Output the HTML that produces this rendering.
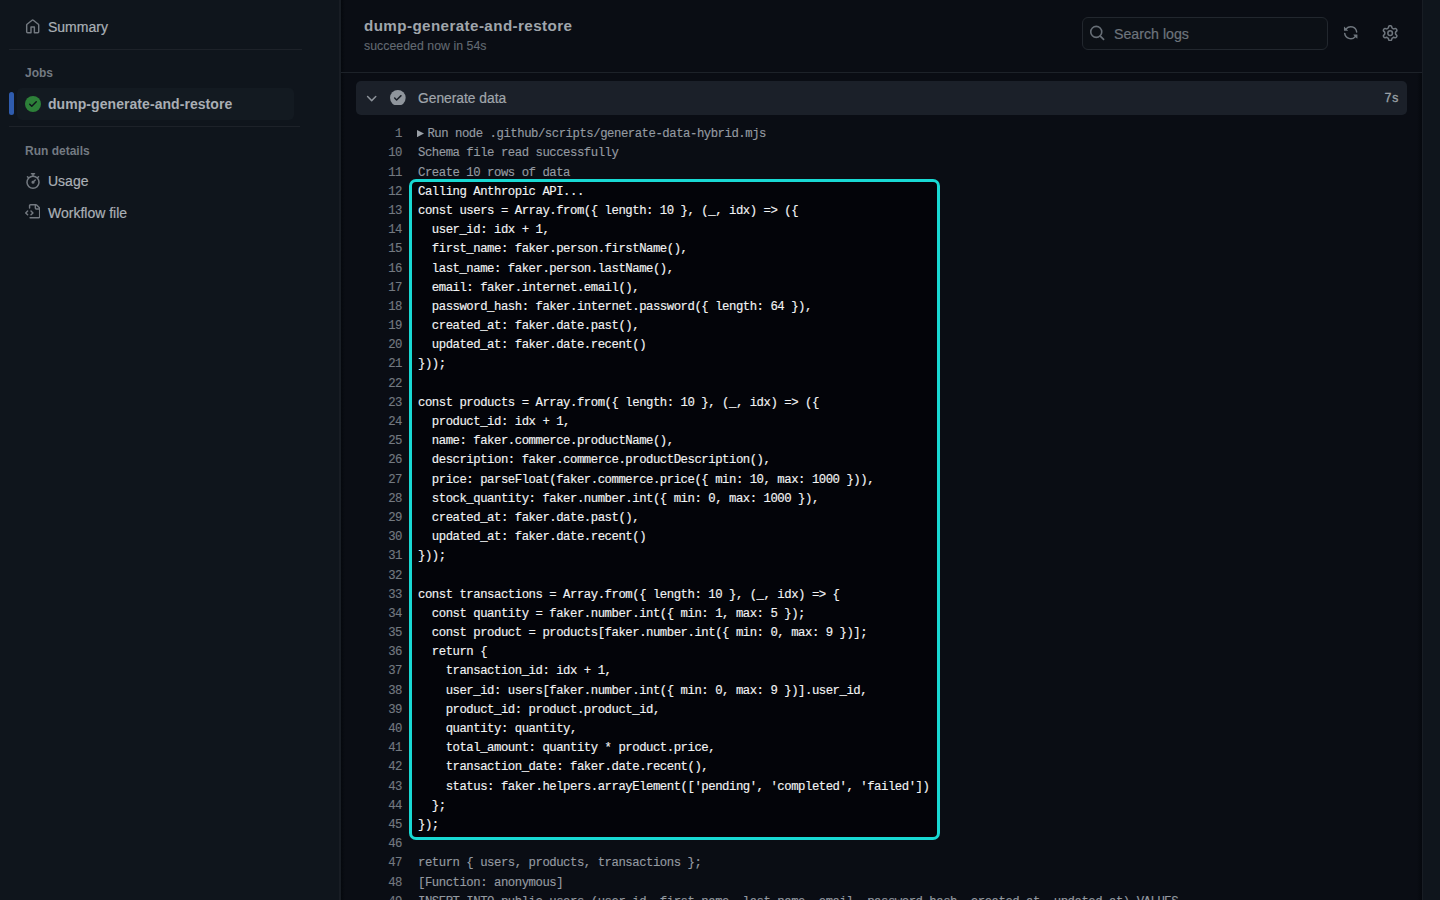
<!DOCTYPE html>
<html><head><meta charset="utf-8">
<style>
*{box-sizing:border-box;margin:0;padding:0}
html,body{width:1440px;height:900px;overflow:hidden;background:#0a0d14;font-family:"Liberation Sans",sans-serif}
.abs{position:absolute}
#side{left:0;top:0;width:339px;height:900px;background:#0f151c}
#sband{left:341px;top:0;width:4px;height:900px;background:linear-gradient(to right,#05080d,#0a0d14)}
#sideb{left:339px;top:0;width:2px;height:900px;background:#181d24}
#rpanel{left:1422px;top:0;width:18px;height:900px;background:#0f151c;border-left:1px solid #181d24}
#rband{left:1417px;top:73px;width:5px;height:827px;background:linear-gradient(to right,#0a0d14,#05080d)}
.sep{height:1px;background:#1d2229}
.t{white-space:nowrap;line-height:1}
.r{-webkit-text-stroke:0.2px currentColor}
svg{display:block}
#logs{left:356px;top:125.2px;width:1050px;font-family:"Liberation Mono",monospace;font-size:12.3px;letter-spacing:-0.469px;line-height:19.2px;-webkit-text-stroke:0.15px currentColor}
.ln{position:absolute;left:0;width:46px;text-align:right;color:#737980}
.lt{position:absolute;left:62px;color:#949aa1;white-space:pre}
.row{position:relative;height:19.2px}
#hl{left:409px;top:179px;width:531px;height:661px;border:3px solid #18d9d3;border-radius:7px;background:#030409}
.row.in .lt{color:#f2f3f4}
</style></head><body>
<div id="side" class="abs"></div>
<div id="sideb" class="abs"></div>
<div id="sband" class="abs"></div>
<div id="rband" class="abs"></div>
<div id="rpanel" class="abs"></div>

<!-- sidebar -->
<svg class="abs" style="left:25px;top:19px" width="15.4" height="15.4" viewBox="0 0 16 16" fill="#737980"><path d="M6.906.664a1.749 1.749 0 0 1 2.187 0l5.25 4.2c.415.332.657.835.657 1.367v7.019A1.75 1.75 0 0 1 13.25 15h-3.5a.75.75 0 0 1-.75-.75V9H7v5.25a.75.75 0 0 1-.75.75h-3.5A1.75 1.75 0 0 1 1 13.250V6.23c0-.531.242-1.034.657-1.366l5.25-4.2Zm1.25 1.171a.25.25 0 0 0-.312 0l-5.25 4.2a.25.25 0 0 0-.094.196v7.019c0 .138.112.25.25.25H5.5V8.25a.75.75 0 0 1 .75-.75h3.5a.75.75 0 0 1 .75.75v5.25h2.75a.25.25 0 0 0 .25-.25V6.23a.25.25 0 0 0-.094-.195Z"/></svg>
<div class="abs t r" style="left:48px;top:20px;font-size:14px;color:#aab0b6">Summary</div>
<div class="abs sep" style="left:9px;top:49px;width:293px"></div>
<div class="abs t" style="left:25px;top:67px;font-size:12px;font-weight:bold;color:#737a82">Jobs</div>
<div class="abs" style="left:17px;top:88px;width:277px;height:32px;border-radius:5px;background:#131a21"></div>
<div class="abs" style="left:9px;top:92px;width:5px;height:23px;border-radius:3px;background:#2f5cae"></div>
<svg class="abs" style="left:24.5px;top:95.5px" width="16" height="16" viewBox="0 0 16 16"><circle cx="8" cy="8" r="8" fill="#2d8039"/><path d="M11.78 6.28a.751.751 0 0 0-.018-1.042.751.751 0 0 0-1.042-.018L6.75 9.19 5.28 7.72a.751.751 0 0 0-1.042.018.751.751 0 0 0-.018 1.042l2 2a.75.75 0 0 0 1.06 0Z" fill="#0f141b"/></svg>
<div class="abs t" style="left:48px;top:97px;font-size:14px;letter-spacing:0.06px;font-weight:bold;color:#a9aeb4">dump-generate-and-restore</div>
<div class="abs sep" style="left:9px;top:126px;width:291px"></div>
<div class="abs t" style="left:25px;top:145px;font-size:12px;font-weight:bold;color:#737a82">Run details</div>
<svg class="abs" style="left:24.7px;top:172.9px" width="16" height="16" viewBox="0 0 16 16" fill="#737980"><path d="M5.75.75A.75.75 0 0 1 6.5 0h3a.75.75 0 0 1 0 1.5h-.75v1l-.001.041a6.724 6.724 0 0 1 3.464 1.435l.007-.006.75-.75a.749.749 0 0 1 1.275.326.749.749 0 0 1-.215.734l-.75.75-.006.007a6.75 6.75 0 1 1-10.548 0L2.72 5.030l-.75-.75a.751.751 0 0 1 .018-1.042.751.751 0 0 1 1.042-.018l.75.75.007.006A6.72 6.72 0 0 1 7.25 2.541V1.5H6.5a.75.75 0 0 1-.75-.75ZM8 14.5a5.25 5.25 0 1 0-.001-10.501A5.25 5.25 0 0 0 8 14.5Zm.389-6.7 1.33-1.33a.75.75 0 1 1 1.061 1.06L9.45 8.861A1.503 1.503 0 0 1 8 10.75a1.499 1.499 0 1 1 .389-2.950Z"/></svg>
<div class="abs t r" style="left:48px;top:174px;font-size:14px;color:#aab0b6">Usage</div>
<svg class="abs" style="left:24.5px;top:203.5px" width="15.4" height="15.4" viewBox="0 0 16 16" fill="#737980"><path d="M4 1.75C4 .784 4.784 0 5.75 0h5.586c.464 0 .909.184 1.237.513l2.914 2.914c.329.328.513.773.513 1.237v8.586A1.75 1.75 0 0 1 14.25 15h-9a.75.75 0 0 1 0-1.5h9a.25.25 0 0 0 .25-.25V6h-2.75A1.75 1.75 0 0 1 10 4.25V1.5H5.75a.25.25 0 0 0-.25.25v2.5a.75.75 0 0 1-1.5 0Zm1.72 4.97a.75.75 0 0 1 1.06 0l2 2a.75.75 0 0 1 0 1.06l-2 2a.749.749 0 0 1-1.275-.326.749.749 0 0 1 .215-.734l1.47-1.47-1.470-1.47a.75.75 0 0 1 0-1.06ZM3.28 7.78 1.81 9.25l1.47 1.47a.751.751 0 0 1-.018 1.042.751.751 0 0 1-1.042.018l-2-2a.75.75 0 0 1 0-1.06l2-2a.751.751 0 0 1 1.042.018.751.751 0 0 1 .018 1.042Zm8.22-6.218V4.25c0 .138.112.25.25.25h2.688l-.011-.013-2.914-2.914-.013-.011Z"/></svg>
<div class="abs t r" style="left:48px;top:206px;font-size:14px;color:#aab0b6">Workflow file</div>

<!-- header -->
<div class="abs t" style="left:364px;top:18.3px;font-size:15.2px;letter-spacing:0.4px;font-weight:bold;color:#a0a6ac">dump-generate-and-restore</div>
<div class="abs t" style="left:364px;top:40.3px;font-size:12.3px;letter-spacing:0.04px;-webkit-text-stroke:0.1px currentColor;color:#636a72">succeeded now in 54s</div>
<div class="abs" style="left:1082px;top:17px;width:246px;height:33px;border:1px solid #22272e;border-radius:6px;background:#0c1016"></div>
<svg class="abs" style="left:1084px;top:20px" width="26" height="26" viewBox="0 0 26 26"><circle cx="12.25" cy="11.9" r="5.5" fill="none" stroke="#676e76" stroke-width="1.6"/><path d="M16.3 16.1 19.6 19.4" stroke="#676e76" stroke-width="1.7" stroke-linecap="round"/></svg>
<div class="abs t r" style="left:1114px;top:26.8px;font-size:14.2px;color:#6d747c">Search logs</div>
<svg class="abs" style="left:1343px;top:24.8px" width="15.4" height="15.4" viewBox="0 0 16 16" fill="#6f767e"><path d="M1.705 8.005a.75.75 0 0 1 .834.656 5.5 5.5 0 0 0 9.592 2.97l-1.204-1.204a.25.25 0 0 1 .177-.427h3.646a.25.25 0 0 1 .25.25v3.646a.25.25 0 0 1-.427.177l-1.38-1.38A7.002 7.002 0 0 1 1.05 8.84a.75.75 0 0 1 .656-.834ZM8 2.5a5.487 5.487 0 0 0-4.131 1.869l1.204 1.204A.25.25 0 0 1 4.896 6H1.25A.25.25 0 0 1 1 5.75V2.104a.25.25 0 0 1 .427-.177l1.38 1.38A7.002 7.002 0 0 1 14.95 7.16a.75.75 0 0 1-1.49.178A5.5 5.5 0 0 0 8 2.5Z"/></svg>
<svg class="abs" style="left:1381.8px;top:24.9px" width="16.3" height="16.3" viewBox="0 0 16 16" fill="#6f767e"><path d="M8 0a8.2 8.2 0 0 1 .701.031C9.444.095 9.99.645 10.16 1.29l.288 1.107c.018.066.079.158.212.224.231.114.454.243.668.386.123.082.233.09.299.071l1.103-.303c.644-.176 1.392.021 1.82.63.27.385.506.792.704 1.218.315.675.111 1.422-.364 1.891l-.814.806c-.049.048-.098.147-.088.294.016.257.016.515 0 .772-.01.147.038.246.088.294l.814.806c.475.469.679 1.216.364 1.891a7.977 7.977 0 0 1-.704 1.217c-.428.61-1.176.807-1.82.63l-1.102-.302c-.067-.019-.177-.011-.3.071a5.909 5.909 0 0 1-.668.386c-.133.066-.194.158-.211.224l-.29 1.106c-.168.646-.715 1.196-1.458 1.26a8.006 8.006 0 0 1-1.402 0c-.743-.064-1.289-.614-1.458-1.26l-.289-1.106c-.018-.066-.079-.158-.212-.224a5.738 5.738 0 0 1-.668-.386c-.123-.082-.233-.09-.299-.071l-1.103.303c-.644.176-1.392-.021-1.82-.63a8.12 8.12 0 0 1-.704-1.218c-.315-.675-.111-1.422.363-1.891l.815-.806c.05-.048.098-.147.088-.294a6.214 6.214 0 0 1 0-.772c.01-.147-.038-.246-.088-.294l-.815-.806C.635 6.045.431 5.298.746 4.623a7.92 7.92 0 0 1 .704-1.217c.428-.61 1.176-.807 1.82-.63l1.102.302c.067.019.177.011.3-.071.214-.143.437-.272.668-.386.133-.066.194-.158.211-.224l.29-1.106C6.009.645 6.556.095 7.299.03 7.53.01 7.764 0 8 0Zm-.571 1.525c-.036.003-.108.036-.137.146l-.289 1.105c-.147.561-.549.967-.998 1.189-.173.086-.34.183-.5.29-.417.278-.97.423-1.529.27l-1.103-.303c-.109-.03-.175.016-.195.045-.22.312-.412.644-.573.99-.014.031-.021.11.059.19l.815.806c.411.406.562.957.53 1.456a4.709 4.709 0 0 0 0 .582c.032.499-.119 1.05-.53 1.456l-.815.806c-.081.08-.073.159-.059.19.162.346.353.677.573.989.02.03.085.076.195.046l1.102-.303c.56-.153 1.113-.008 1.53.27.161.107.328.204.501.29.447.222.85.629.997 1.189l.289 1.105c.029.109.101.143.137.146a6.6 6.6 0 0 0 1.142 0c.036-.003.108-.036.137-.146l.289-1.105c.147-.561.549-.967.998-1.189.173-.086.34-.183.5-.29.417-.278.97-.423 1.529-.27l1.103.303c.109.029.175-.016.195-.045.22-.313.411-.644.573-.99.014-.031.021-.11-.059-.19l-.815-.806c-.411-.406-.562-.957-.53-1.456a4.709 4.709 0 0 0 0-.582c-.032-.499.119-1.05.53-1.456l.815-.806c.081-.08.073-.159.059-.19a6.464 6.464 0 0 0-.573-.989c-.02-.03-.085-.076-.195-.046l-1.102.303c-.56.153-1.113.008-1.53-.27a4.44 4.44 0 0 0-.501-.29c-.447-.222-.85-.629-.997-1.189l-.289-1.105c-.029-.11-.101-.143-.137-.146a6.6 6.6 0 0 0-1.142 0ZM11 8a3 3 0 1 1-6 0 3 3 0 0 1 6 0ZM9.5 8a1.5 1.5 0 1 0-3.001.001A1.5 1.5 0 0 0 9.5 8Z"/></svg>
<div class="abs sep" style="left:341px;top:72px;width:1081px"></div>

<!-- step header -->
<div class="abs" style="left:356px;top:80.7px;width:1050.5px;height:33.9px;border-radius:5px;background:#1b2029"></div>
<svg class="abs" style="left:363.5px;top:90.5px" width="15.4" height="15.4" viewBox="0 0 16 16" fill="#8d939a"><path d="M12.78 5.22a.749.749 0 0 1 0 1.06l-4.250 4.25a.749.749 0 0 1-1.06 0L3.22 6.28a.749.749 0 0 1 .326-1.275.749.749 0 0 1 .734.215L8 8.939l3.72-3.719a.749.749 0 0 1 1.06 0Z"/></svg>
<svg class="abs" style="left:390.3px;top:89.8px" width="15.7" height="15.7" viewBox="0 0 16 16"><circle cx="8" cy="8" r="8" fill="#8f959c"/><path d="M11.78 6.28a.751.751 0 0 0-.018-1.042.751.751 0 0 0-1.042-.018L6.75 9.19 5.28 7.72a.751.751 0 0 0-1.042.018.751.751 0 0 0-.018 1.042l2 2a.75.75 0 0 0 1.06 0Z" fill="#1a1f27"/></svg>
<div class="abs t r" style="left:418px;top:92.1px;font-size:13.8px;color:#a0a6ac">Generate data</div>
<div class="abs t" style="left:1384.3px;top:92.5px;font-family:'Liberation Mono',monospace;font-size:12.4px;letter-spacing:-0.3px;-webkit-text-stroke:0.3px currentColor;color:#9aa0a6">7s</div>

<div id="hl" class="abs"></div>

<div id="logs" class="abs">
<div class="row"><span class="ln">1</span><svg style="position:absolute;left:60.8px;top:4.8px" width="7" height="7.2" viewBox="0 0 7 7.2"><path d="M0 0 7 3.6 0 7.2Z" fill="#9aa0a7"/></svg><span class="lt" style="left:71.4px">Run node .github/scripts/generate-data-hybrid.mjs</span></div>
<div class="row"><span class="ln">10</span><span class="lt">Schema file read successfully</span></div>
<div class="row"><span class="ln">11</span><span class="lt">Create 10 rows of data</span></div>
<div class="row in"><span class="ln">12</span><span class="lt">Calling Anthropic API...</span></div>
<div class="row in"><span class="ln">13</span><span class="lt">const users = Array.from({ length: 10 }, (_, idx) =&gt; ({</span></div>
<div class="row in"><span class="ln">14</span><span class="lt">  user_id: idx + 1,</span></div>
<div class="row in"><span class="ln">15</span><span class="lt">  first_name: faker.person.firstName(),</span></div>
<div class="row in"><span class="ln">16</span><span class="lt">  last_name: faker.person.lastName(),</span></div>
<div class="row in"><span class="ln">17</span><span class="lt">  email: faker.internet.email(),</span></div>
<div class="row in"><span class="ln">18</span><span class="lt">  password_hash: faker.internet.password({ length: 64 }),</span></div>
<div class="row in"><span class="ln">19</span><span class="lt">  created_at: faker.date.past(),</span></div>
<div class="row in"><span class="ln">20</span><span class="lt">  updated_at: faker.date.recent()</span></div>
<div class="row in"><span class="ln">21</span><span class="lt">}));</span></div>
<div class="row in"><span class="ln">22</span><span class="lt"></span></div>
<div class="row in"><span class="ln">23</span><span class="lt">const products = Array.from({ length: 10 }, (_, idx) =&gt; ({</span></div>
<div class="row in"><span class="ln">24</span><span class="lt">  product_id: idx + 1,</span></div>
<div class="row in"><span class="ln">25</span><span class="lt">  name: faker.commerce.productName(),</span></div>
<div class="row in"><span class="ln">26</span><span class="lt">  description: faker.commerce.productDescription(),</span></div>
<div class="row in"><span class="ln">27</span><span class="lt">  price: parseFloat(faker.commerce.price({ min: 10, max: 1000 })),</span></div>
<div class="row in"><span class="ln">28</span><span class="lt">  stock_quantity: faker.number.int({ min: 0, max: 1000 }),</span></div>
<div class="row in"><span class="ln">29</span><span class="lt">  created_at: faker.date.past(),</span></div>
<div class="row in"><span class="ln">30</span><span class="lt">  updated_at: faker.date.recent()</span></div>
<div class="row in"><span class="ln">31</span><span class="lt">}));</span></div>
<div class="row in"><span class="ln">32</span><span class="lt"></span></div>
<div class="row in"><span class="ln">33</span><span class="lt">const transactions = Array.from({ length: 10 }, (_, idx) =&gt; {</span></div>
<div class="row in"><span class="ln">34</span><span class="lt">  const quantity = faker.number.int({ min: 1, max: 5 });</span></div>
<div class="row in"><span class="ln">35</span><span class="lt">  const product = products[faker.number.int({ min: 0, max: 9 })];</span></div>
<div class="row in"><span class="ln">36</span><span class="lt">  return {</span></div>
<div class="row in"><span class="ln">37</span><span class="lt">    transaction_id: idx + 1,</span></div>
<div class="row in"><span class="ln">38</span><span class="lt">    user_id: users[faker.number.int({ min: 0, max: 9 })].user_id,</span></div>
<div class="row in"><span class="ln">39</span><span class="lt">    product_id: product.product_id,</span></div>
<div class="row in"><span class="ln">40</span><span class="lt">    quantity: quantity,</span></div>
<div class="row in"><span class="ln">41</span><span class="lt">    total_amount: quantity * product.price,</span></div>
<div class="row in"><span class="ln">42</span><span class="lt">    transaction_date: faker.date.recent(),</span></div>
<div class="row in"><span class="ln">43</span><span class="lt">    status: faker.helpers.arrayElement(['pending', 'completed', 'failed'])</span></div>
<div class="row in"><span class="ln">44</span><span class="lt">  };</span></div>
<div class="row in"><span class="ln">45</span><span class="lt">});</span></div>
<div class="row"><span class="ln">46</span><span class="lt"></span></div>
<div class="row"><span class="ln">47</span><span class="lt">return { users, products, transactions };</span></div>
<div class="row"><span class="ln">48</span><span class="lt">[Function: anonymous]</span></div>
<div class="row"><span class="ln">49</span><span class="lt">INSERT INTO public.users (user_id, first_name, last_name, email, password_hash, created_at, updated_at) VALUES</span></div>
</div>
</body></html>
